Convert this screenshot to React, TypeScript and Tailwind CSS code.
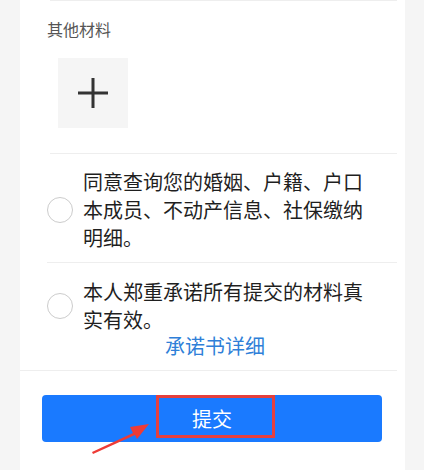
import { useState } from "react";

export default function App() {
    const [agreeQuery, setAgreeQuery] = useState(false);
    const [agreePromise, setAgreePromise] = useState(false);

    return (
        <div className="w-[424px] h-[470px] overflow-hidden bg-[#f5f5f5] font-['Noto_Sans_CJK_SC',sans-serif]">
            <div className="relative ml-[20px] w-[385px] h-full bg-white">
                <div className="pl-[27px] pr-[8px]">
                    <div className="border-t border-[#eeeeee] ml-[3px]" />

                    {/* Other materials */}
                    <div className="pt-[16px] text-[16px] leading-[24px] text-[#555555]">其他材料</div>
                    <button className="mt-[17px] ml-[11px] w-[70px] h-[70px] bg-[#f5f5f5] flex items-center justify-center">
                        <svg width="32" height="32" viewBox="0 0 32 32">
                            <path d="M16 1v30M1 16h30" stroke="#333333" strokeWidth="3" />
                        </svg>
                    </button>
                    <div className="mt-[25px] border-t border-[#eeeeee] ml-[3px]" />

                    {/* Consent 1 */}
                    <div className="flex items-center gap-[10px] pt-[14px] pb-[10px]">
                        <button
                            onClick={() => setAgreeQuery(!agreeQuery)}
                            className={`w-[26px] h-[26px] shrink-0 rounded-full border ${agreeQuery ? "border-[#1a7aff] bg-[#1a7aff]" : "border-[#cccccc]"}`}
                        />
                        <p className="w-[285px] text-[20px] leading-[28px] text-[#1f1f1f]">
                            同意查询您的婚姻、户籍、户口本成员、不动产信息、社保缴纳明细。
                        </p>
                    </div>
                    <div className="border-t border-[#eeeeee]" />

                    {/* Consent 2 */}
                    <div className="flex items-center gap-[10px] pt-[15px]">
                        <button
                            onClick={() => setAgreePromise(!agreePromise)}
                            className={`w-[26px] h-[26px] shrink-0 rounded-full border ${agreePromise ? "border-[#1a7aff] bg-[#1a7aff]" : "border-[#cccccc]"}`}
                        />
                        <p className="w-[285px] text-[20px] leading-[28px] text-[#1f1f1f]">
                            本人郑重承诺所有提交的材料真实有效。
                        </p>
                    </div>
                    <div className="mt-[1px] text-center pr-[14px] text-[20px] leading-[22px] text-[#2f7fd8] pb-[13px]">承诺书详细</div>
                </div>
                <div className="border-t border-[#eeeeee] mr-[8px]" />

                {/* Submit */}
                <div className="relative pt-[24px] pl-[22px]">
                    <button className="w-[340px] h-[47px] rounded-[4px] bg-[#1a7aff] text-white text-[20px] leading-[47px]">
                        提交
                    </button>
                    <div className="absolute left-[136px] top-[24px] w-[119px] h-[43px] border-[3px] border-[#e5403d]" />
                    <svg className="absolute left-[70px] top-[50px]" width="62" height="34" viewBox="0 0 62 34">
                        <path d="M2 31 L43 12 L40 6 L59 3 L47 18 L45 14 L3 33 Z" fill="#ee3b36" />
                    </svg>
                </div>
            </div>
        </div>
    );
}
